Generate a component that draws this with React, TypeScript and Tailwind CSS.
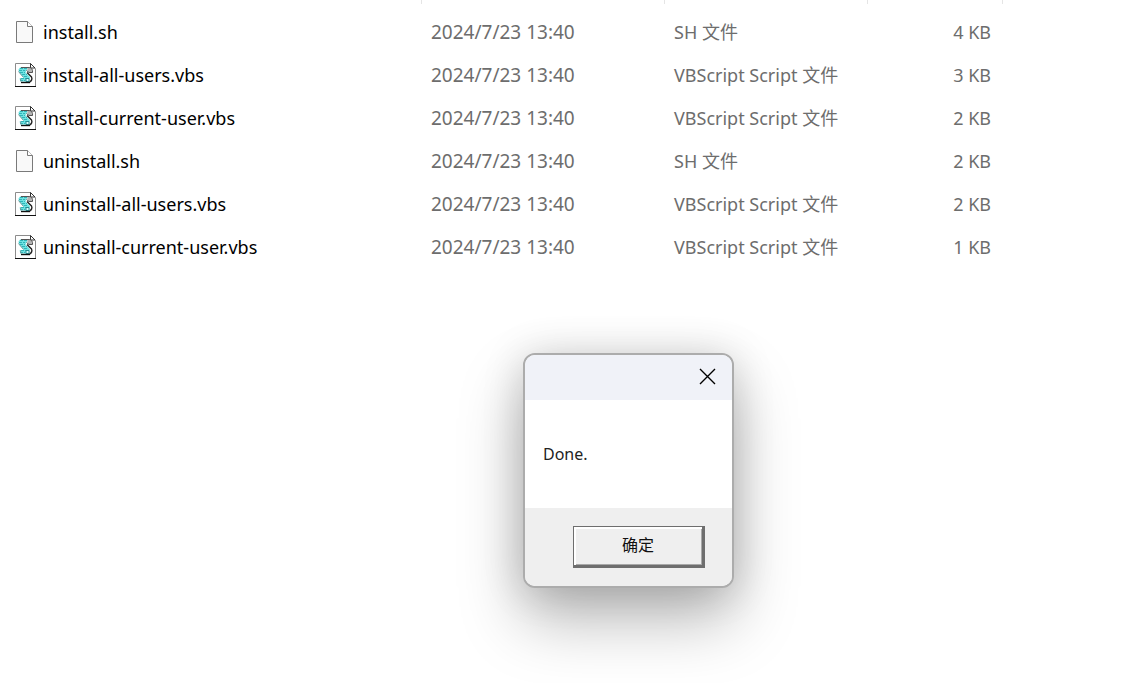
type FileKind = "SH 文件" | "VBScript Script 文件";

const files: { name: string; modified: string; kind: FileKind; size: string }[] = [
  { name: "install.sh", modified: "2024/7/23 13:40", kind: "SH 文件", size: "4 KB" },
  { name: "install-all-users.vbs", modified: "2024/7/23 13:40", kind: "VBScript Script 文件", size: "3 KB" },
  { name: "install-current-user.vbs", modified: "2024/7/23 13:40", kind: "VBScript Script 文件", size: "2 KB" },
  { name: "uninstall.sh", modified: "2024/7/23 13:40", kind: "SH 文件", size: "2 KB" },
  { name: "uninstall-all-users.vbs", modified: "2024/7/23 13:40", kind: "VBScript Script 文件", size: "2 KB" },
  { name: "uninstall-current-user.vbs", modified: "2024/7/23 13:40", kind: "VBScript Script 文件", size: "1 KB" },
];

function BlankFileIcon() {
  return (
    <svg width="22" height="24" viewBox="0 0 22 24" fill="none" aria-hidden="true">
      <path d="M1.5 1.5H12.5L17.5 6.5V22.5H1.5Z" fill="#f9f9f9" stroke="#7a7a7a" />
      <path d="M12.5 1.5V6.5H17.5" fill="#fff" stroke="#7a7a7a" />
    </svg>
  );
}

function ScriptFileIcon() {
  return (
    <svg width="22" height="24" viewBox="0 0 22 24" fill="none" aria-hidden="true">
      <path d="M0.5 23V0.5H15.5L20.5 5.5V23" fill="#fff" stroke="#8c8c8c" />
      <path d="M15.5 0.5L20 5H15.5Z" fill="#fff" stroke="#333" />
      <path d="M0 23.5H21" stroke="#111" />
      {/* sheet hanging between the two rolls */}
      <path d="M5 4.5H13L11.5 7.5L10.5 9.5L15 14L14 18.5H5.5L4.5 15.5L9 15L4 9.5L3.5 6.5Z" fill="#6fe3e2" />
      <path
        d="M5 5.5H12M4 7.5H10M5 9.5H10M7 11.5H12M9 13.5H13M6 15.5H11M5 17.5H10"
        stroke="#30b4b8"
        strokeDasharray="3 1"
      />
      <path d="M3.5 8.5L8.5 14.5M5.5 15.5L6 18.5" stroke="#6f9a9c" />
      {/* upper curl */}
      <path d="M12.5 5C15 4.5 17.5 5.5 17.5 9.5H13.5C12.5 8 12 6.5 12.5 5Z" fill="#b4b4b4" />
      <path d="M6 4.5H14C16.5 4.8 18 6.5 17.5 9.5H14L11.5 7.5" stroke="#555" />
      {/* lower curl */}
      <path d="M12 9.5L16.5 14C17.5 16 16.5 18 14.5 19" stroke="#222" strokeWidth="1.4" />
      <path d="M11 15.5H14V18.5H11Z" fill="#d9ffff" stroke="#278b91" />
      <path d="M6 19.5H15" stroke="#111" strokeWidth="1.4" />
    </svg>
  );
}

function FileTable() {
  return (
    <table className="w-full table-fixed border-separate border-spacing-0 text-left text-[19px] leading-6 text-[#6d6d6d]">
      <colgroup>
        <col className="w-[422px]" />
        <col className="w-[243px]" />
        <col className="w-[203px]" />
        <col className="w-[135px]" />
        <col />
      </colgroup>
      <thead>
        <tr className="h-1">
          <th aria-label="名称" className="border-r border-[#e5e5e5] p-0" />
          <th aria-label="修改日期" className="border-r border-[#e5e5e5] p-0" />
          <th aria-label="类型" className="border-r border-[#e5e5e5] p-0" />
          <th aria-label="大小" className="border-r border-[#e5e5e5] p-0" />
          <td className="p-0" />
        </tr>
      </thead>
      <tbody>
        <tr className="h-1.5">
          <td colSpan={5} className="p-0" />
        </tr>
        {files.map((file) => (
          <tr key={file.name} className="h-[43px]">
            <td className="p-0 pl-[15px]">
              <a href="#" className="flex items-center gap-1.5 text-lg leading-6 text-black">
                {file.kind === "SH 文件" ? <BlankFileIcon /> : <ScriptFileIcon />}
                {file.name}
              </a>
            </td>
            <td className="p-0 pl-[9px]">{file.modified}</td>
            <td className="p-0 pl-[9px] text-lg leading-6">{file.kind}</td>
            <td className="p-0 pr-3 text-right text-lg leading-6">{file.size}</td>
            <td className="p-0" />
          </tr>
        ))}
      </tbody>
    </table>
  );
}

function DoneDialog() {
  return (
    <div
      role="dialog"
      aria-describedby="message"
      className="absolute left-[523px] top-[353px] w-[211px] overflow-hidden rounded-xl border-2 border-[#acacac] bg-white shadow-[0_32px_64px_rgba(0,0,0,0.28),0_2px_42px_rgba(0,0,0,0.16)]"
    >
      <div className="flex h-[45px] items-start justify-end bg-[#f0f2f8] pr-4 pt-[13px]">
        <button type="button" aria-label="关闭" className="text-black">
          <svg width="17" height="17" viewBox="0 0 17 17" fill="none" stroke="currentColor" strokeWidth="1.4">
            <path d="M1 1L16 16M16 1L1 16" />
          </svg>
        </button>
      </div>
      <p id="message" className="px-[18px] py-[42px] text-base leading-6 text-[#222]">
        Done.
      </p>
      <div className="flex justify-end bg-[#efefef] py-[18px] pr-[27px]">
        <button
          type="button"
          className="h-[42px] w-[132px] border border-b-[3px] border-r-[3px] border-[#6e6e6e] bg-[#efefef] pb-0.5 text-base leading-6 text-[#111] shadow-[inset_2px_2px_0_#fff,inset_-1px_-1px_0_#a8a8a8]"
        >
          确定
        </button>
      </div>
    </div>
  );
}

export default function App() {
  return (
    <main className="relative min-h-screen overflow-hidden bg-white font-['Noto_Sans','Noto_Sans_CJK_SC',sans-serif]">
      <FileTable />
      <DoneDialog />
    </main>
  );
}
